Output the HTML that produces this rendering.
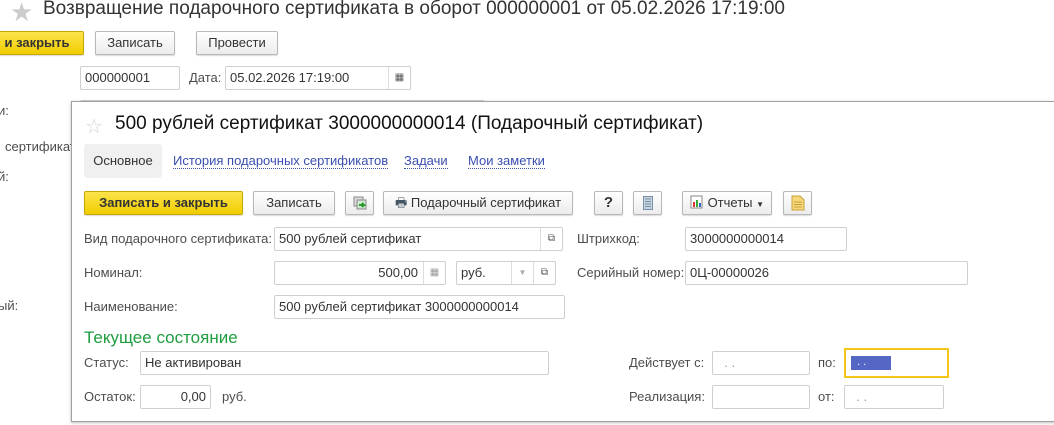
<!DOCTYPE html>
<html><head><meta charset="utf-8"><style>
*{box-sizing:border-box;margin:0;padding:0}
body{width:1054px;height:425px;background:#fff;position:relative;overflow:hidden;font-family:"Liberation Sans",Arial,sans-serif;font-size:13px;color:#4d4d4d}
.a{position:absolute;white-space:nowrap}
.btn{position:absolute;height:24px;border:1px solid #b8b8b8;border-radius:2px;background:linear-gradient(#fff,#ececec);box-shadow:0 1px 1px rgba(0,0,0,.15);color:#333;font-size:13px;text-align:center;line-height:22px;white-space:nowrap}
.y{background:linear-gradient(#fbe44a,#f2cc00);border-color:#c9a900;color:#333;font-weight:bold}
.f{position:absolute;height:24px;border:1px solid #cfcfcf;border-radius:2px;background:#fff;color:#333;padding-left:4px;line-height:22px;font-size:13px;white-space:nowrap}
.sb{position:absolute;top:0;right:0;width:22px;height:22px;border-left:1px solid #ddd;font-size:10px;text-align:center;line-height:22px;color:#555}
.lbl{position:absolute;color:#4d4d4d;font-size:13px;white-space:nowrap}
</style></head><body>
<div class="a" style="left:10px;top:-3px;font-size:26px;color:#ccc">★</div>
<div class="a" style="left:43px;top:-2px;font-size:19px;color:#333">Возвращение подарочного сертификата в оборот 000000001 от 05.02.2026 17:19:00</div>
<div class="btn y" style="left:-10px;top:31px;width:94px">и закрыть</div>
<div class="btn" style="left:95px;top:31px;width:80px">Записать</div>
<div class="btn" style="left:196px;top:31px;width:82px">Провести</div>
<div class="f" style="left:80px;top:66px;width:100px">000000001</div>
<div class="lbl" style="left:189px;top:70px">Дата:</div>
<div class="f" style="left:225px;top:66px;width:186px">05.02.2026 17:19:00<div class="sb">▦</div></div>
<div class="f" style="left:80px;top:100px;width:405px;height:10px"></div>
<div class="lbl" style="left:-2px;top:103px">и:</div>
<div class="lbl" style="left:5px;top:139px">сертификат</div>
<div class="lbl" style="left:-2px;top:169px">й:</div>
<div class="lbl" style="left:-2px;top:298px">ый:</div>

<div style="position:absolute;left:71px;top:101px;width:1000px;height:321px;background:#fff;border:1px solid #a0a0a0;box-shadow:0 1px 3px rgba(0,0,0,.25)">
<div class="a" style="left:13px;top:12px;font-size:20px;color:#d0d0d0">☆</div>
<div class="a" style="left:43px;top:11px;font-size:19px;color:#111">500 рублей сертификат 3000000000014 (Подарочный сертификат)</div>
<div class="a" style="left:12px;top:42px;width:78px;height:34px;background:#f0f0f0;border-radius:3px;color:#333;line-height:34px;text-align:center">Основное</div>
<div class="a" style="left:101px;top:51px;color:#3a4fb0;border-bottom:1px dotted #3a4fb0">История подарочных сертификатов</div>
<div class="a" style="left:332px;top:51px;color:#3a4fb0;border-bottom:1px dotted #3a4fb0">Задачи</div>
<div class="a" style="left:396px;top:51px;color:#3a4fb0;border-bottom:1px dotted #3a4fb0">Мои заметки</div>
<div class="btn y" style="left:12px;top:89px;width:159px">Записать и закрыть</div>
<div class="btn" style="left:181px;top:89px;width:82px">Записать</div>
<div class="btn" style="left:273px;top:89px;width:29px"><svg width="16" height="16" style="margin-top:3px"><rect x="2" y="2" width="9" height="9" fill="#ddd" stroke="#888"/><rect x="5" y="5" width="9" height="9" fill="#cfe8cf" stroke="#888"/><path d="M7 10h5l-2-2M12 10l-2 2" stroke="#2a9a2a" stroke-width="2" fill="none"/></svg></div>
<div class="btn" style="left:311px;top:89px;width:190px"><span style="color:#456;font-size:13px">🖶</span> Подарочный сертификат</div>
<div class="btn" style="left:522px;top:89px;width:29px;font-weight:bold;font-size:15px">?</div>
<div class="btn" style="left:561px;top:89px;width:29px"><svg width="10" height="14" style="margin-top:4px"><rect x="0.5" y="0.5" width="9" height="13" fill="#c7d3e0" stroke="#7890a8"/><path d="M2 3h6M2 5.5h6M2 8h6M2 10.5h6" stroke="#7890a8"/></svg></div>
<div class="btn" style="left:610px;top:89px;width:90px"><svg width="14" height="14" style="vertical-align:-2px"><rect x="1" y="1" width="11" height="12" fill="#fff" stroke="#888"/><rect x="3" y="7" width="2" height="5" fill="#d33"/><rect x="6" y="5" width="2" height="7" fill="#3a3"/><rect x="9" y="8" width="2" height="4" fill="#36c"/></svg> Отчеты <span style="font-size:8px">▼</span></div>
<div class="btn" style="left:711px;top:89px;width:29px"><svg width="14" height="16" style="margin-top:3px"><path d="M1 1h8l4 4v10H1z" fill="#f6d77a" stroke="#c9a13a"/><path d="M3 7h8M3 9.5h8M3 12h8" stroke="#c9a13a"/></svg></div>

<div class="lbl" style="left:12px;top:129px">Вид подарочного сертификата:</div>
<div class="f" style="left:202px;top:125px;width:289px">500 рублей сертификат<div class="sb">⧉</div></div>
<div class="lbl" style="left:505px;top:129px">Штрихкод:</div>
<div class="f" style="left:613px;top:125px;width:162px">3000000000014</div>

<div class="lbl" style="left:12px;top:163px">Номинал:</div>
<div class="f" style="left:202px;top:159px;width:172px;text-align:right;padding-right:27px">500,00<div class="sb" style="color:#999">▦</div></div>
<div class="f" style="left:384px;top:159px;width:100px">руб.<div class="sb" style="right:22px;color:#aaa;font-size:8px">▼</div><div class="sb">⧉</div></div>
<div class="lbl" style="left:505px;top:163px">Серийный номер:</div>
<div class="f" style="left:613px;top:159px;width:283px">0Ц-00000026</div>

<div class="lbl" style="left:12px;top:197px">Наименование:</div>
<div class="f" style="left:202px;top:193px;width:291px">500 рублей сертификат 3000000000014</div>

<div class="a" style="left:12px;top:226px;font-size:17px;color:#1f9d3f">Текущее состояние</div>
<div class="lbl" style="left:12px;top:253px">Статус:</div>
<div class="f" style="left:68px;top:249px;width:409px">Не активирован</div>
<div class="lbl" style="left:12px;top:287px">Остаток:</div>
<div class="f" style="left:68px;top:283px;width:71px;text-align:right;padding-right:4px">0,00</div>
<div class="lbl" style="left:150px;top:287px">руб.</div>

<div class="lbl" style="left:557px;top:253px">Действует с:</div>
<div class="f" style="left:640px;top:249px;width:98px;color:#999">&nbsp; . .</div>
<div class="lbl" style="left:746px;top:253px">по:</div>
<div class="a" style="left:772px;top:246px;width:105px;height:30px;border:2px solid #f5c518;background:#fff"><div style="position:absolute;left:5px;top:6px;width:40px;height:14px;background:#5467c4;color:#fff;font-size:11px;line-height:12px">&nbsp; . .</div></div>
<div class="lbl" style="left:557px;top:287px">Реализация:</div>
<div class="f" style="left:640px;top:283px;width:98px"></div>
<div class="lbl" style="left:746px;top:287px">от:</div>
<div class="f" style="left:772px;top:283px;width:100px;color:#999">&nbsp; . .</div>
</div>
</body></html>
